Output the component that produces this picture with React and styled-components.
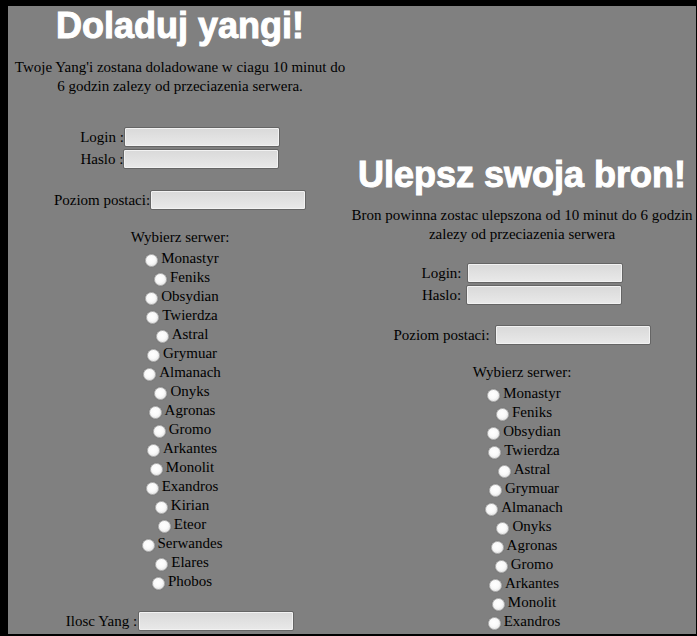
import React from "react";
import styled, { createGlobalStyle } from "styled-components";

const GlobalStyle = createGlobalStyle`
  html, body {
    margin: 0;
    padding: 0;
    height: 636px;
    overflow: hidden;
    background: #000;
  }
`;

const Frame = styled.div`
  width: 697px;
  height: 636px;
  box-sizing: border-box;
  padding: 6px 1px 2px 8px;
  background: #000;
`;

const Board = styled.div`
  height: 100%;
  overflow: hidden;
  background: #808080;
  display: grid;
  grid-template-columns: 344px 340px;
  align-items: start;
  font-family: "Liberation Serif", "Times New Roman", serif;
  font-size: 15px;
  color: #000;
`;

const Column = styled.div`
  display: flex;
  flex-direction: column;
  align-items: center;
  padding-top: ${(props) => props.top || 0}px;
`;

const Title = styled.h1`
  margin: 0;
  height: 40px;
  line-height: 40px;
  font-family: "Liberation Sans", Arial, sans-serif;
  font-weight: bold;
  font-size: 36px;
  color: #fff;
  -webkit-text-stroke: 1px #fff;
  white-space: nowrap;
`;

const Info = styled.div`
  margin-top: ${(props) => props.gap}px;
  text-align: center;
  line-height: 19px;
`;

const InfoLine = styled.div`
  white-space: nowrap;
`;

const FieldRow = styled.div`
  display: flex;
  align-items: center;
  justify-content: center;
  height: 22px;
  gap: ${(props) => props.space}px;
  margin-top: ${(props) => props.gap || 0}px;
  white-space: nowrap;
`;

const TextBox = styled.input`
  box-sizing: border-box;
  width: 156px;
  height: 20px;
  margin: 0;
  border: 1px solid #656565;
  border-radius: 2px;
  background: linear-gradient(#d9d9d9, #e9e9e9);
  box-shadow: inset 0 0 0 1px #f2f2f2;
  outline: none;
`;

const ServerLabel = styled.div`
  margin-top: ${(props) => props.gap}px;
  height: 19px;
  line-height: 19px;
`;

const ServerList = styled.div`
  margin-top: 2px;
  display: flex;
  flex-direction: column;
  align-items: center;
`;

const ServerRow = styled.label`
  display: flex;
  align-items: center;
  gap: 3px;
  height: 19px;
  line-height: 19px;
  white-space: nowrap;
`;

const Radio = styled.input`
  appearance: none;
  box-sizing: border-box;
  width: 13px;
  height: 13px;
  margin: 3px 0 0 4px;
  border-radius: 50%;
  border: 1px solid #b8b8b8;
  background: radial-gradient(circle at 45% 40%, #ffffff 0%, #fafafa 45%, #d8d8d8 100%);
  box-shadow: 0 0 1px #5c5c5c;
`;

const servers = [
  "Monastyr",
  "Feniks",
  "Obsydian",
  "Twierdza",
  "Astral",
  "Grymuar",
  "Almanach",
  "Onyks",
  "Agronas",
  "Gromo",
  "Arkantes",
  "Monolit",
  "Exandros",
  "Kirian",
  "Eteor",
  "Serwandes",
  "Elares",
  "Phobos",
];

function Servers({ name, gap }) {
  return (
    <>
      <ServerLabel gap={gap}>Wybierz serwer:</ServerLabel>
      <ServerList>
        {servers.map((s) => (
          <ServerRow key={s}>
            <Radio type="radio" name={name} value={s} />
            {s}
          </ServerRow>
        ))}
      </ServerList>
    </>
  );
}

export default function App() {
  return (
    <>
      <GlobalStyle />
      <Frame>
        <Board>
          <Column>
            <Title>Doladuj yangi!</Title>
            <Info gap={12}>
              <InfoLine>Twoje Yang'i zostana doladowane w ciagu 10 minut do</InfoLine>
              <InfoLine>6 godzin zalezy od przeciazenia serwera.</InfoLine>
            </Info>
            <FieldRow gap={30} space={0}>
              Login :<TextBox type="text" />
            </FieldRow>
            <FieldRow space={0}>
              Haslo :<TextBox type="password" />
            </FieldRow>
            <FieldRow gap={19} space={0}>
              Poziom postaci:<TextBox type="text" />
            </FieldRow>
            <Servers name="yang" gap={17} />
            <FieldRow gap={19} space={1}>
              Ilosc Yang :<TextBox type="text" />
            </FieldRow>
          </Column>

          <Column top={149}>
            <Title>Ulepsz swoja bron!</Title>
            <Info gap={11}>
              <InfoLine>Bron powinna zostac ulepszona od 10 minut do 6 godzin</InfoLine>
              <InfoLine>zalezy od przeciazenia serwera</InfoLine>
            </Info>
            <FieldRow gap={18} space={5}>
              Login:<TextBox type="text" />
            </FieldRow>
            <FieldRow space={5}>
              Haslo:<TextBox type="password" />
            </FieldRow>
            <FieldRow gap={18} space={5}>
              Poziom postaci:<TextBox type="text" />
            </FieldRow>
            <Servers name="bron" gap={17} />
          </Column>
        </Board>
      </Frame>
    </>
  );
}
